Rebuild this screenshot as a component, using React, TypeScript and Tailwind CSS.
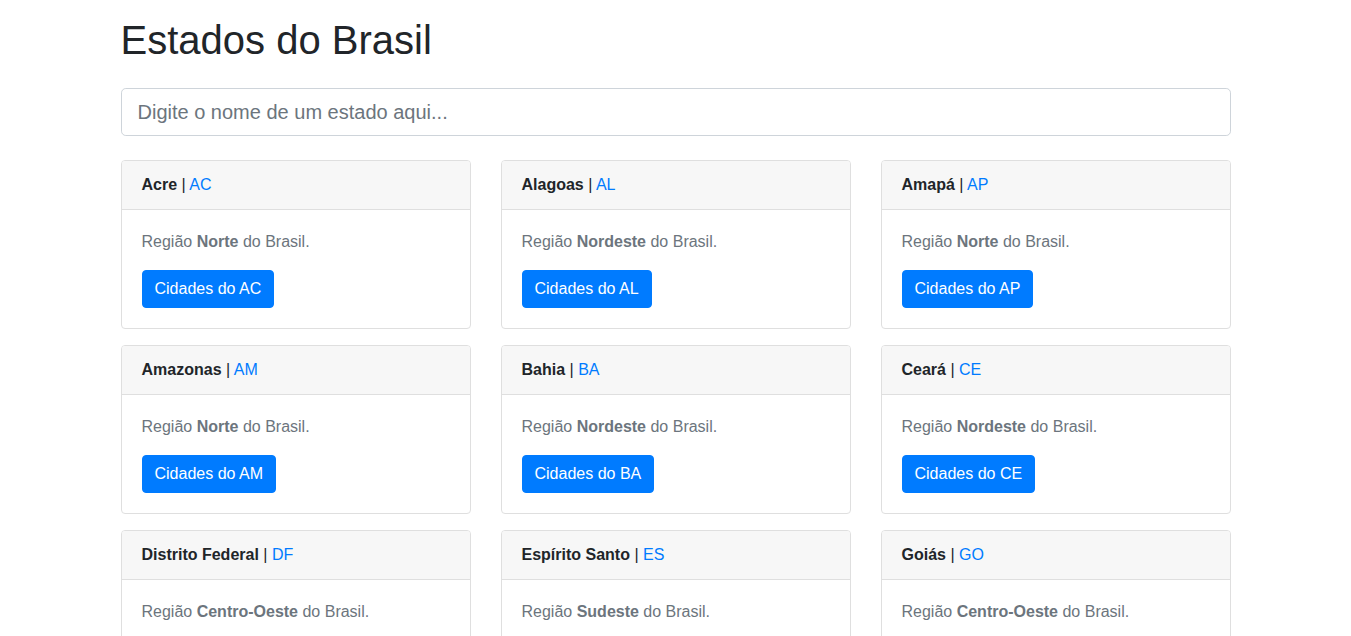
import React from "react";

const estados: [string, string, string][] = [
  ["Acre", "AC", "Norte"],
  ["Alagoas", "AL", "Nordeste"],
  ["Amapá", "AP", "Norte"],
  ["Amazonas", "AM", "Norte"],
  ["Bahia", "BA", "Nordeste"],
  ["Ceará", "CE", "Nordeste"],
  ["Distrito Federal", "DF", "Centro-Oeste"],
  ["Espírito Santo", "ES", "Sudeste"],
  ["Goiás", "GO", "Centro-Oeste"],
  ["Maranhão", "MA", "Nordeste"],
  ["Mato Grosso", "MT", "Centro-Oeste"],
  ["Mato Grosso do Sul", "MS", "Centro-Oeste"],
  ["Minas Gerais", "MG", "Sudeste"],
  ["Pará", "PA", "Norte"],
  ["Paraíba", "PB", "Nordeste"],
  ["Paraná", "PR", "Sul"],
  ["Pernambuco", "PE", "Nordeste"],
  ["Piauí", "PI", "Nordeste"],
  ["Rio de Janeiro", "RJ", "Sudeste"],
  ["Rio Grande do Norte", "RN", "Nordeste"],
  ["Rio Grande do Sul", "RS", "Sul"],
  ["Rondônia", "RO", "Norte"],
  ["Roraima", "RR", "Norte"],
  ["Santa Catarina", "SC", "Sul"],
  ["São Paulo", "SP", "Sudeste"],
  ["Sergipe", "SE", "Nordeste"],
  ["Tocantins", "TO", "Norte"],
];

export default function App() {
  return (
    <div
      className="min-h-screen bg-white text-[#212529] text-base leading-6"
      style={{ fontFamily: '"Liberation Sans", Arial, sans-serif' }}
    >
      <div className="mx-auto w-[1140px] px-[15px]">
        <h1 className="mt-4 mb-2 text-[40px] leading-[48px] font-normal">Estados do Brasil</h1>
        <input
          type="text"
          placeholder="Digite o nome de um estado aqui..."
          className="mt-6 block w-full h-[48px] px-4 py-2 text-[20px] leading-[30px] border border-[#ced4da] rounded-[4.8px] placeholder:text-[#6c757d] outline-none"
        />
        <div className="mt-6 grid grid-cols-3 gap-x-[30px]">
          {estados.map(([nome, uf, regiao]) => (
            <div key={uf} className="mb-4 border border-[#dfdfdf] rounded-[4px] overflow-hidden bg-white">
              <div className="bg-[#f7f7f7] border-b border-[#dfdfdf] px-5 py-3 leading-6">
                <strong className="font-bold">{nome}</strong> | <span className="text-[#007bff]">{uf}</span>
              </div>
              <div className="p-5">
                <p className="mb-4 text-[#6c757d] leading-6">
                  Região <strong className="font-bold">{regiao}</strong> do Brasil.
                </p>
                <button className="bg-[#007bff] text-white px-3 py-[6px] rounded-[4px] leading-6 border border-[#007bff]">
                  Cidades do {uf}
                </button>
              </div>
            </div>
          ))}
        </div>
      </div>
    </div>
  );
}
